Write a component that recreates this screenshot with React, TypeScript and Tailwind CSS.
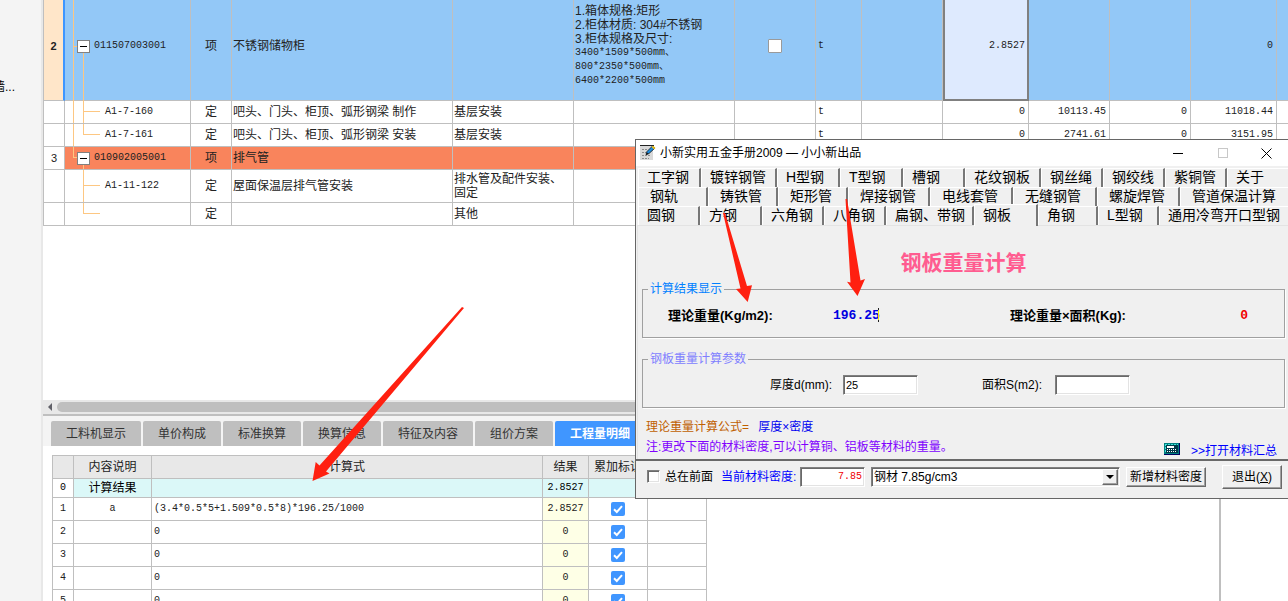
import React, { useState } from 'react'

type BillRow = {
  no?: string
  code?: string
  kind: string
  name?: string
  spec?: string
  feature?: string[]
  unit?: string
  qty?: string
  price?: string
  extra?: string
  total?: string
  tone: 'active' | 'group' | 'plain'
  height: string
}

const billRows: BillRow[] = [
  {
    no: '2',
    code: '011507003001',
    kind: '项',
    name: '不锈钢储物柜',
    feature: [
      '1.箱体规格:矩形',
      '2.柜体材质: 304#不锈钢',
      '3.柜体规格及尺寸:',
      '3400*1509*500mm、',
      '800*2350*500mm、',
      '6400*2200*500mm',
    ],
    unit: 't',
    qty: '2.8527',
    total: '0',
    tone: 'active',
    height: 'h-[109px]',
  },
  { code: 'A1-7-160', kind: '定', name: '吧头、门头、柜顶、弧形钢梁 制作', spec: '基层安装', unit: 't', qty: '0', price: '10113.45', extra: '0', total: '11018.44', tone: 'plain', height: 'h-[23px]' },
  { code: 'A1-7-161', kind: '定', name: '吧头、门头、柜顶、弧形钢梁 安装', spec: '基层安装', unit: 't', qty: '0', price: '2741.61', extra: '0', total: '3151.95', tone: 'plain', height: 'h-[23px]' },
  { no: '3', code: '010902005001', kind: '项', name: '排气管', tone: 'group', height: 'h-[23px]' },
  { code: 'A1-11-122', kind: '定', name: '屋面保温层排气管安装', spec: '排水管及配件安装、固定', tone: 'plain', height: 'h-[33px]' },
  { kind: '定', spec: '其他', tone: 'plain', height: 'h-[23px]' },
]

const rowTone = {
  active: 'bg-[#93c8f7]',
  group: 'bg-[#f9845c]',
  plain: 'bg-white',
}

const detailTabs = [
  { label: '工料机显示', width: 'w-[90px]' },
  { label: '单价构成', width: 'w-[78px]' },
  { label: '标准换算', width: 'w-[78px]' },
  { label: '换算信息', width: 'w-[78px]' },
  { label: '特征及内容', width: 'w-[90px]' },
  { label: '组价方案', width: 'w-[78px]' },
  { label: '工程量明细', width: 'w-[90px]' },
]

const calcRows = [
  { note: 'a', formula: '(3.4*0.5*5+1.509*0.5*8)*196.25/1000', result: '2.8527' },
  { note: '', formula: '0', result: '0' },
  { note: '', formula: '0', result: '0' },
  { note: '', formula: '0', result: '0' },
  { note: '', formula: '0', result: '0' },
]

const steelTabs = [
  [
    { label: '工字钢', width: 'w-[63px]' },
    { label: '镀锌钢管', width: 'w-[76px]' },
    { label: 'H型钢', width: 'w-[63px]' },
    { label: 'T型钢', width: 'w-[63px]' },
    { label: '槽钢', width: 'w-[62px]' },
    { label: '花纹钢板', width: 'w-[76px]' },
    { label: '钢丝绳', width: 'w-[62px]' },
    { label: '钢绞线', width: 'w-[62px]' },
    { label: '紫铜管', width: 'w-[62px]' },
    { label: '关于', width: 'flex-1' },
  ],
  [
    { label: '钢轨', width: 'w-[70px]' },
    { label: '铸铁管', width: 'w-[70px]' },
    { label: '矩形管', width: 'w-[70px]' },
    { label: '焊接钢管', width: 'w-[82px]' },
    { label: '电线套管', width: 'w-[83px]' },
    { label: '无缝钢管', width: 'w-[84px]' },
    { label: '螺旋焊管', width: 'w-[83px]' },
    { label: '管道保温计算', width: 'flex-1' },
  ],
  [
    { label: '圆钢', width: 'w-[62px]' },
    { label: '方钢', width: 'w-[62px]' },
    { label: '六角钢', width: 'w-[62px]' },
    { label: '八角钢', width: 'w-[62px]' },
    { label: '扁钢、带钢', width: 'w-[88px]' },
    { label: '钢板', width: 'w-[64px]' },
    { label: '角钢', width: 'w-[60px]' },
    { label: 'L型钢', width: 'w-[61px]' },
    { label: '通用冷弯开口型钢', width: 'flex-1' },
  ],
]

const tabInset = ['pl-2', 'pl-[11px]', 'pl-2']

const cell = 'border-r border-b border-[#bfbfbf] p-0'
const num = "font-['Liberation_Mono','Noto_Sans_CJK_SC',monospace] text-[10px]"
const sunken =
  'border border-t-[#808080] border-l-[#808080] border-r-white border-b-white bg-white shadow-[inset_1px_1px_0_#696969,inset_-1px_-1px_0_#e3e3e3] outline-none rounded-none'
const raised =
  'border border-t-white border-l-white border-r-[#696969] border-b-[#696969] bg-[#f0f0f0] shadow-[inset_-1px_-1px_0_#a0a0a0]'

function TreeLines() {
  return (
    <svg
      className="absolute top-0 left-0 pointer-events-none"
      width="40"
      height="226"
      viewBox="65 -8 40 226"
      fill="none"
      stroke="#fdc782"
      shapeRendering="crispEdges"
    >
      <path d="M73.5 -8V157.5H77M73.5 46.5H77" />
      <path d="M83.5 53V134.5H100M83.5 111.5H100" />
      <path d="M83.5 164V213.5H100M83.5 185.5H100" />
    </svg>
  )
}

function CodeCell({ row, withTree }: { row: BillRow; withTree: boolean }) {
  const parent = row.tone !== 'plain'
  return (
    <td className={`${cell} relative`}>
      {withTree && <TreeLines />}
      <div className={`relative flex items-center ${parent ? 'pl-3 gap-1' : 'pl-10'}`}>
        {parent && (
          <button
            type="button"
            aria-label="折叠"
            className="w-[13px] h-[13px] shrink-0 bg-white border border-[#808080] flex items-center justify-center"
          >
            <span className="w-[7px] h-px bg-black" />
          </button>
        )}
        <span className={num}>{row.code}</span>
      </div>
    </td>
  )
}

function BillTable() {
  return (
    <table className="-mt-2 w-full table-fixed border-separate border-spacing-0 border-l border-[#bfbfbf] text-xs leading-[14px] text-[#222]">
      <colgroup>
        <col className="w-[21px]" />
        <col className="w-[126px]" />
        <col className="w-[41px]" />
        <col className="w-[221px]" />
        <col className="w-[121px]" />
        <col className="w-[161px]" />
        <col className="w-[81px]" />
        <col className="w-[46px]" />
        <col className="w-[81px]" />
        <col className="w-[86px]" />
        <col className="w-[81px]" />
        <col className="w-[81px]" />
        <col className="w-[86px]" />
        <col />
      </colgroup>
      <tbody>
        {billRows.map((row, i) => {
          const active = row.tone === 'active'
          return (
            <tr key={i} className={`${rowTone[row.tone]} ${row.height}`}>
              <th
                className={`border-b border-b-[#bfbfbf] p-0 text-[11px] text-center ${
                  active
                    ? 'border-r-2 border-r-[#3d96ff] bg-[#ffe6c9] font-bold'
                    : 'border-r border-r-[#bfbfbf] bg-white font-normal'
                }`}
              >
                {row.no}
              </th>
              <CodeCell row={row} withTree={i === 0} />
              <td className={`${cell} text-center`}>{row.kind}</td>
              <td className={`${cell} pl-px whitespace-nowrap`}>{row.name}</td>
              <td className={`${cell} pl-px`}>{row.spec}</td>
              <td className={`${cell} pl-px whitespace-nowrap`}>
                {row.feature?.map((line, n) => (
                  <div key={line} className={n > 2 ? num : ''}>
                    {line}
                  </div>
                ))}
              </td>
              <td className={`${cell} text-center`}>
                {active && (
                  <input
                    type="checkbox"
                    aria-label="主要清单"
                    className="block mx-auto size-[14px] appearance-none rounded-[1px] border border-[#9a9a9a] bg-white"
                  />
                )}
              </td>
              <td className={`${cell} ${num} pl-[2px]`}>{row.unit}</td>
              <td className={cell} />
              <td
                className={`${num} text-right pr-[2px] ${
                  active
                    ? 'border-2 border-t-0 border-[#808080] bg-[#deeafe]'
                    : 'border-r border-b border-[#bfbfbf] pr-[3px]'
                }`}
              >
                {row.qty}
              </td>
              <td className={`${cell} ${num} text-right pr-[3px]!`}>{row.price}</td>
              <td className={`${cell} ${num} text-right pr-[3px]!`}>{row.extra}</td>
              <td className={`${cell} ${num} text-right pr-[3px]!`}>{row.total}</td>
              <td className="border-b border-[#bfbfbf] p-0" />
            </tr>
          )
        })}
      </tbody>
    </table>
  )
}

function CheckMark() {
  return (
    <svg className="absolute inset-0 m-auto pointer-events-none" width="14" height="14" viewBox="0 0 14 14" fill="none">
      <path d="M3 7.2 5.8 10 11 4.2" stroke="white" strokeWidth="2" />
    </svg>
  )
}

function CalcTable() {
  return (
    <table className="ml-[9px] mt-[9px] w-[655px] table-fixed border-separate border-spacing-0 border-l border-t border-[#bfbfbf] text-xs leading-[14px] text-[#222]">
      <colgroup>
        <col className="w-[21px]" />
        <col className="w-[78px]" />
        <col className="w-[391px]" />
        <col className="w-[46px]" />
        <col className="w-[59px]" />
        <col className="w-[59px]" />
      </colgroup>
      <thead>
        <tr className="h-[23px] bg-[#e8e8e8]">
          <th className={cell} />
          <th className={`${cell} font-normal`}>内容说明</th>
          <th className={`${cell} font-normal`}>计算式</th>
          <th className={`${cell} font-normal`}>结果</th>
          <th className={`${cell} font-normal whitespace-nowrap`}>累加标识</th>
          <th className={`${cell} font-normal`} />
        </tr>
      </thead>
      <tbody>
        <tr className="h-[19px] bg-[#dbf8f8] text-black">
          <th className={`${cell} ${num} bg-white font-normal`}>0</th>
          <td className={`${cell} text-center`}>计算结果</td>
          <td className={cell} />
          <td className={`${cell} ${num} text-center`}>2.8527</td>
          <td className={cell} />
          <td className={cell} />
        </tr>
        {calcRows.map((row, i) => (
          <tr key={i} className="h-[23px]">
            <th className={`${cell} ${num} font-normal`}>{i + 1}</th>
            <td className={`${cell} ${num} text-center`}>{row.note}</td>
            <td className={`${cell} ${num} pl-[2px]`}>{row.formula}</td>
            <td className={`${cell} ${num} bg-[#feffe6] text-center`}>{row.result}</td>
            <td className={cell}>
              <div className="relative mx-auto size-[14px]">
                <input
                  type="checkbox"
                  defaultChecked
                  aria-label="累加标识"
                  className="block size-[14px] appearance-none rounded-[2px] bg-[#4096ff]"
                />
                <CheckMark />
              </div>
            </td>
            <td className={cell} />
          </tr>
        ))}
      </tbody>
    </table>
  )
}

function DetailPane() {
  const [tab, setTab] = useState('工程量明细')
  return (
    <section className="h-[201px] shrink-0 overflow-hidden">
      <div className="flex h-[14px] items-center bg-[#e8e8e8] pl-[5px]">
        <svg width="4" height="8" viewBox="0 0 4 8" className="mr-[5px]">
          <path d="M4 0V8L0 4Z" fill="#606068" />
        </svg>
        <div className="h-[10px] flex-1 rounded-full bg-[#bfbfbf]" />
      </div>
      <div className="h-[2px] bg-[#bfbfbf]" />
      <div className="flex h-[30px] items-end gap-[2px] bg-[#f4f4f4] pl-2">
        {detailTabs.map(({ label, width }) => (
          <button
            key={label}
            type="button"
            onClick={() => setTab(label)}
            className={`${width} h-[25px] rounded-t-[2px] text-xs ${
              tab === label ? 'bg-[#4096ff] font-bold text-white' : 'bg-[#bfbfbf] text-[#333]'
            }`}
          >
            {label}
          </button>
        ))}
      </div>
      <div className="mr-[67px] h-full border-r-2 border-[#bfbfbf] flow-root">
        <CalcTable />
      </div>
    </section>
  )
}

function NotepadIcon() {
  return (
    <svg width="16" height="16" viewBox="0 0 16 16">
      <rect x="0" y="1" width="13" height="14" fill="#d9d9d9" />
      <path d="M0 .5H14" stroke="#222" />
      <path d="M2 4.5H7M2 7.5H6M2 10.5H10M2 13.5H9" stroke="#8c8c8c" strokeDasharray="2 1" />
      <path d="M6 9.500 7 6.500 12.500 1 15 3 9 8.500Z" fill="#1a8be0" stroke="#111" strokeWidth=".8" />
      <path d="M11.500 2 14 4.200 15.500 3 13 .8Z" fill="#f5c518" />
      <path d="M6 10 7 7.500 8.500 9Z" fill="#111" />
    </svg>
  )
}

function CalculatorIcon() {
  return (
    <svg width="16" height="12" viewBox="0 0 16 12" shapeRendering="crispEdges">
      <rect width="16" height="12" fill="#000060" />
      <rect width="15" height="11" fill="#008080" />
      <path d="M1 1.500H14M1.500 1V10" stroke="#40e0d8" strokeDasharray="2 1" />
      <rect x="2" y="2" width="12" height="8" fill="#003848" />
      <rect x="3" y="3" width="7" height="2" fill="#fff" />
      <path d="M3 6.500H13M3 8.500H13" stroke="#fff" strokeDasharray="1 1" />
    </svg>
  )
}

function SteelTabs() {
  const [active, setActive] = useState('钢板')
  return (
    <div className="pl-[2px] pt-[2px]">
      {steelTabs.map((row, r) => (
        <div key={r} className="flex h-[19px]">
          {row.map(({ label, width }) => {
            const on = label === active
            return (
              <button
                key={label}
                type="button"
                onClick={() => setActive(label)}
                className={`${width} ${tabInset[r]} min-w-0 whitespace-nowrap border-t border-l border-white pb-[2px] text-left text-sm leading-[14px] ${
                  on
                    ? 'relative -mt-[2px] h-[22px] border-r-2 border-r-[#777] bg-[#f0f0f0]'
                    : 'h-[19px] border-r-2 border-r-[#777] last:border-r-0'
                }`}
              >
                {label}
              </button>
            )
          })}
        </div>
      ))}
    </div>
  )
}

function ToolWindow() {
  return (
    <section className="absolute top-[139px] right-0 left-[635px] flex h-[360px] flex-col border border-r-0 border-[#666] bg-[#f0f0f0] text-xs leading-4 text-black">
      <header className="flex h-[26px] shrink-0 items-center bg-white pl-1">
        <NotepadIcon />
        <h1 className="ml-1 flex-1">小新实用五金手册2009 — 小小新出品</h1>
        <button type="button" aria-label="最小化" className="flex w-[45px] justify-center">
          <svg width="10" height="10" viewBox="0 0 10 10" stroke="black">
            <path d="M0 5.500H10" />
          </svg>
        </button>
        <button type="button" aria-label="最大化" className="flex w-[45px] justify-center">
          <svg width="10" height="10" viewBox="0 0 10 10" fill="none" stroke="#c8c8c8">
            <rect x=".5" y=".5" width="9" height="9" />
          </svg>
        </button>
        <button type="button" aria-label="关闭" className="flex w-[43px] justify-center">
          <svg width="11" height="11" viewBox="0 0 11 11" stroke="black">
            <path d="M.5 .5 10.500 10.500M10.500 .5 .5 10.500" />
          </svg>
        </button>
      </header>

      <SteelTabs />

      <div className="ml-px flex flex-1 flex-col border-t border-l border-[#e3e3e3] pl-1 pr-[3px]">
        <h2 className="mt-6 text-center text-[21px] font-bold leading-[26px] text-[#ff5c90]">钢板重量计算</h2>

        <fieldset className="mt-[5px] h-[57px] border border-[#a0a0a0] px-0 shadow-[1px_1px_0_white]">
          <legend className="ml-[5px] px-[2px] text-[#0080ff]">计算结果显示</legend>
          <div className="mt-[11px] flex items-center text-[13px] font-bold">
            <span className="w-[165px] pl-[25px] whitespace-nowrap">理论重量(Kg/m2):</span>
            <output className="w-[202px] pl-[25px] font-['Liberation_Mono',monospace] text-[#0000e0]">196.25</output>
            <span className="flex-1 whitespace-nowrap">理论重量×面积(Kg):</span>
            <output className="pr-9 font-['Liberation_Mono',monospace] text-[#f00000]">0</output>
          </div>
        </fieldset>

        <fieldset className="mt-[13px] h-[57px] border border-[#a0a0a0] px-0 shadow-[1px_1px_0_white]">
          <legend className="ml-[5px] px-[2px] text-[#8080ff]">钢板重量计算参数</legend>
          <div className="mt-2 flex items-center">
            <label htmlFor="thick" className="w-[200px] shrink-0 pl-[127px] whitespace-nowrap">
              厚度d(mm):
            </label>
            <input id="thick" defaultValue="25" className={`${sunken} h-5 w-[75px] px-[2px] text-[11px]`} />
            <label htmlFor="area" className="w-[137px] pl-[64px] whitespace-nowrap">
              面积S(m2):
            </label>
            <input id="area" className={`${sunken} h-5 w-[75px] px-[2px] text-[11px]`} />
          </div>
        </fieldset>

        <div className="mt-[11px] flex pl-1">
          <div className="flex-1">
            <p className="text-[#c06000]">
              理论重量计算公式= <span className="ml-[6px] text-[#0000f0]">厚度×密度</span>
            </p>
            <p className="mt-1 text-[#8000ff]">注:更改下面的材料密度,可以计算铜、铝板等材料的重量。</p>
          </div>
          <div className="mt-6 mr-2 flex items-start gap-[11px]">
            <CalculatorIcon />
            <a href="#summary" className="text-[#0000ff]">
              &gt;&gt;打开材料汇总
            </a>
          </div>
        </div>
      </div>

      <footer className="flex h-[39px] shrink-0 items-center border-t-2 border-[#696969] pr-[6px] pb-[6px] pl-[11px]">
        <input id="ontop" type="checkbox" className={`${sunken} size-[13px] appearance-none`} />
        <label htmlFor="ontop" className="ml-[5px]">
          总在前面
        </label>
        <label htmlFor="density" className="ml-2 w-[79px] text-[#0000ff]">
          当前材料密度:
        </label>
        <input
          id="density"
          defaultValue="7.85"
          className={`${sunken} h-5 w-[65px] px-[2px] text-right font-['Liberation_Mono',monospace] text-[10px] text-[#f00000]`}
        />
        <div className="relative ml-[6px] flex-1">
          <select aria-label="材料" className={`${sunken} block h-5 w-full appearance-none px-[2px] text-xs leading-4`}>
            <option>钢材 7.85g/cm3</option>
          </select>
          <span className={`${raised} pointer-events-none absolute top-[2px] right-[2px] flex h-4 w-4 items-center justify-center`}>
            <svg width="8" height="4" viewBox="0 0 8 4">
              <path d="M0 0H8L4 4Z" />
            </svg>
          </span>
        </div>
        <button type="button" className={`${raised} ml-[6px] h-5 w-20 whitespace-nowrap`}>
          新增材料密度
        </button>
        <button type="button" className={`${raised} ml-4 h-6 w-[60px] whitespace-nowrap`}>
          退出(<u>X</u>)
        </button>
      </footer>
    </section>
  )
}

// red pointers drawn over both windows
function Arrows() {
  return (
    <svg className="pointer-events-none absolute top-0 left-0" width="1288" height="601" viewBox="0 0 1288 601">
      <g fill="#ff2010">
        <path d="M462 307 464 308 326 471.500 329.500 473.500 312.500 481 315.700 462 319.500 465.500Z" />
        <path d="M723 213 725 213 747 286 752 285.300 747.700 302 736 289 740.500 288.500Z" />
        <path d="M845.500 199 847 199 860.500 280.500 865 279 857.500 296 847 281.700 850.500 282.500Z" />
      </g>
      <path d="M878.500 308V322" stroke="#222" strokeDasharray="2 10" />
      <path d="M878.500 310V320" stroke="#f5e400" />
    </svg>
  )
}

export default function App() {
  return (
    <div className="relative flex h-screen overflow-hidden bg-white font-['Liberation_Sans','Noto_Sans_CJK_SC',sans-serif]">
      <aside className="w-[43px] shrink-0 overflow-hidden border-r-2 border-[#e8e8e8] bg-[#f4f4f4] pt-[79px] text-xs text-black">
        <div className="-ml-[7px] whitespace-nowrap">墙...</div>
      </aside>
      <main className="flex min-w-0 flex-1 flex-col">
        <div className="min-h-0 flex-1 overflow-hidden">
          <BillTable />
        </div>
        <DetailPane />
      </main>
      <ToolWindow />
      <Arrows />
    </div>
  )
}
